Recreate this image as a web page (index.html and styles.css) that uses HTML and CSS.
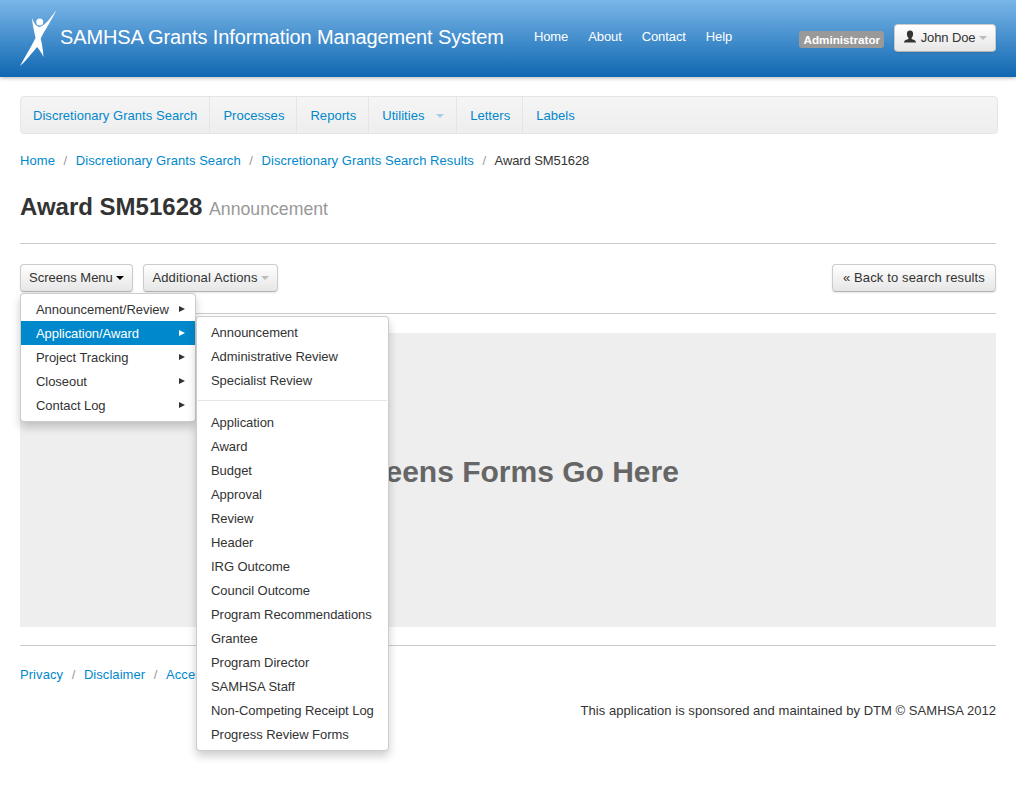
FILE: index.html
```html
<!DOCTYPE html>
<html lang="en">
  <head>
    <meta charset="UTF-8" />
    <title>Award SM51628</title>
    <link rel="stylesheet" href="styles.css">
  </head>
  <body>
    <header class="topbar">
      <svg class="logo" width="40" height="58" viewBox="0 0 40 58">
        <circle cx="19.7" cy="12" r="3.5" fill="#fff" />
        <path fill="#fff" d="M12 8 C14 13 16 16.5 19.5 17 C25 16 30 8 36.5 0 C32 9 27 17 23.5 23 C22 26 21 27 20.7 29 C22 33 23 40 23.5 47 C21 42 19 39 17 37 C12 43 5 52 0 56 C5 47 11 37 15.5 28 C15 24 12.5 16 12 8 Z" />
      </svg>
      <div class="brand">SAMHSA Grants Information Management System</div>
      <nav class="topnav">
        <a href="#">Home</a>
        <a href="#">About</a>
        <a href="#">Contact</a>
        <a href="#">Help</a>
      </nav>
      <div class="user">
        <span class="role">Administrator</span>
        <button class="btn userBtn">
          <svg width="14" height="14" viewBox="0 0 14 14"><path fill="#333" d="M7 0.5 C9.2 0.5 10.3 2.2 10.1 4.2 C10 6 9.2 7.2 8.6 7.8 L8.6 9 C10 9.6 13 10.2 13 12.5 L1 12.5 C1 10.2 4 9.6 5.4 9 L5.4 7.8 C4.8 7.2 4 6 3.9 4.2 C3.7 2.2 4.8 0.5 7 0.5 Z" /></svg>
          John Doe <span class="caret light"></span>
        </button>
      </div>
    </header>

    <main class="page">
      <nav class="subnav">
        <a href="#">Discretionary Grants Search</a>
        <a href="#">Processes</a>
        <a href="#">Reports</a>
        <a href="#">Utilities <span class="caret blue"></span></a>
        <a href="#">Letters</a>
        <a href="#">Labels</a>
      </nav>

      <ul class="crumbs">
        <li><a href="#">Home</a></li>
        <li><a href="#">Discretionary Grants Search</a></li>
        <li><a href="#">Discretionary Grants Search Results</a></li>
        <li class="current">Award SM51628</li>
      </ul>

      <h1>Award SM51628 <small>Announcement</small></h1>
      <hr class="headRule" />

      <div class="toolbar">
        <div class="menuWrap">
          <button class="btn">Screens Menu <span class="caret"></span></button>
          <ul class="menu mainMenu">
            <li><a href="#">Announcement/Review</a></li>
            <li class="active"><a href="#">Application/Award</a>
              <ul class="menu subMenu">
                <li><a href="#">Announcement</a></li>
                <li><a href="#">Administrative Review</a></li>
                <li><a href="#">Specialist Review</a></li>
                <li class="divider"></li>
                <li><a href="#">Application</a></li>
                <li><a href="#">Award</a></li>
                <li><a href="#">Budget</a></li>
                <li><a href="#">Approval</a></li>
                <li><a href="#">Review</a></li>
                <li><a href="#">Header</a></li>
                <li><a href="#">IRG Outcome</a></li>
                <li><a href="#">Council Outcome</a></li>
                <li><a href="#">Program Recommendations</a></li>
                <li><a href="#">Grantee</a></li>
                <li><a href="#">Program Director</a></li>
                <li><a href="#">SAMHSA Staff</a></li>
                <li><a href="#">Non-Competing Receipt Log</a></li>
                <li><a href="#">Progress Review Forms</a></li>
              </ul>
            </li>
            <li><a href="#">Project Tracking</a></li>
            <li><a href="#">Closeout</a></li>
            <li><a href="#">Contact Log</a></li>
          </ul>
        </div>
        <button class="btn wideBtn">Additional Actions <span class="caret light"></span></button>
        <button class="btn wideBtn backBtn">« Back to search results</button>
      </div>
      <hr class="toolRule" />

      <section class="panel">
        <h2>Screens Forms Go Here</h2>
      </section>
      <hr class="footRule" />

      <footer>
        <ul class="crumbs footLinks">
          <li><a href="#">Privacy</a></li>
          <li><a href="#">Disclaimer</a></li>
          <li><a href="#">Accessibility</a></li>
        </ul>
        <p class="sponsor">This application is sponsored and maintained by DTM © SAMHSA 2012</p>
      </footer>
    </main>
  </body>
</html>
```

FILE: styles.css
```css
* {
  box-sizing: border-box;
}
body {
  margin: 0;
  min-height: 803px;
  font-family: "Liberation Sans", Arial, sans-serif;
  font-size: 13px;
  line-height: 18px;
  color: #333;
  background: #fff;
}
a {
  color: #0088cc;
  text-decoration: none;
}
ul {
  list-style: none;
  margin: 0;
  padding: 0;
}
hr {
  border: 0;
  border-top: 1px solid #ccc;
  margin: 0;
}

/* top bar */
.topbar {
  display: flex;
  align-items: center;
  height: 77px;
  padding: 0 20px;
  background: linear-gradient(#7ab6e8, #0f67b1);
  box-shadow: 0 1px 4px rgba(0, 0, 0, 0.3);
}
.logo {
  flex: none;
}
.brand {
  margin: -3px 0 0;
  color: #fff;
  font-size: 20px;
  letter-spacing: -0.12px;
}
.topnav {
  display: flex;
  gap: 20px;
  margin: -3px 0 0 30px;
  letter-spacing: -0.1px;
}
.topnav a {
  color: #fff;
}
.user {
  display: flex;
  align-items: center;
  gap: 10px;
  margin: -1px 0 0 auto;
}
.role {
  margin-top: 2px;
  padding: 0 4px;
  height: 17px;
  line-height: 17px;
  border-radius: 3px;
  background: #999;
  color: #fff;
  font-size: 11.7px;
  font-weight: bold;
}

/* buttons */
.btn {
  display: inline-block;
  height: 28px;
  padding: 0 8px;
  border: 1px solid #ccc;
  border-bottom-color: #b3b3b3;
  border-radius: 4px;
  background: linear-gradient(#fff, #e6e6e6);
  box-shadow: 0 1px 2px rgba(0, 0, 0, 0.1);
  color: #333;
  font: inherit;
  white-space: nowrap;
}
.wideBtn {
  letter-spacing: 0.14px;
}
.userBtn {
  letter-spacing: -0.1px;
}
.userBtn svg {
  vertical-align: -2px;
}
.caret {
  display: inline-block;
  width: 0;
  height: 0;
  vertical-align: 2px;
  border: 4px solid transparent;
  border-top-color: #000;
  border-bottom: 0;
}
.caret.light {
  border-top-color: #bbb;
}
.caret.blue {
  margin-left: 8px;
  border-top-color: #a7cfe6;
}

/* page */
.page {
  padding: 19px 20px 0;
}
.subnav {
  display: flex;
  height: 38px;
  margin-right: -2px;
  border: 1px solid #e5e5e5;
  border-radius: 4px;
  background: linear-gradient(#f5f5f5, #eee);
  letter-spacing: 0.04px;
}
.subnav a {
  padding: 0 12px 0 13px;
  line-height: 37px;
  border-right: 1px solid #e5e5e5;
}
.subnav a:first-child {
  padding-left: 12px;
}
.subnav a:last-child {
  border-right: 0;
}
.crumbs {
  display: flex;
  margin-top: 18px;
  letter-spacing: 0.06px;
}
.crumbs li + li::before {
  content: "/";
  padding: 0 8.6px;
  color: #999;
}
.crumbs .current {
  letter-spacing: -0.1px;
}
h1 {
  margin: 22px 0 0;
  font-size: 24px;
  line-height: 30px;
}
h1 small {
  color: #999;
  font-size: 17.7px;
  font-weight: normal;
}
.headRule {
  margin-top: 19px;
}
.toolbar {
  display: flex;
  gap: 10px;
  margin-top: 20px;
}
.backBtn {
  margin-left: auto;
  padding: 0 10px;
}
.toolRule {
  margin-top: 21px;
}
.panel {
  height: 294px;
  margin-top: 19px;
  padding-top: 121px;
  background: #eee;
  text-align: center;
}
.panel h2 {
  margin: 0;
  color: #666;
  font-size: 30px;
  line-height: 36px;
}
.footRule {
  margin-top: 18px;
}
.crumbs.footLinks {
  margin-top: 20px;
}
.sponsor {
  margin: 18px 0 0;
  text-align: right;
  letter-spacing: 0.04px;
}

/* dropdowns, these sit over the page */
.menuWrap {
  position: relative;
}
.menu {
  position: absolute;
  z-index: 10;
  padding: 3px 0 4px;
  background: #fff;
  border: 1px solid rgba(0, 0, 0, 0.2);
  border-radius: 4px;
  box-shadow: 0 5px 10px rgba(0, 0, 0, 0.2);
  letter-spacing: -0.05px;
  white-space: nowrap;
}
.menu li {
  height: 24px;
}
.menu a {
  display: block;
  height: 24px;
  padding: 0 15px;
  color: #333;
  line-height: 26px;
}
.mainMenu {
  top: 29px;
  left: 0;
  width: 176px;
}
.mainMenu > li {
  position: relative;
}
.mainMenu > li > a::after {
  content: "";
  position: absolute;
  right: 10px;
  top: 9px;
  border: 3.5px solid transparent;
  border-left: 6px solid #333;
  border-right: 0;
}
.mainMenu > li.active > a {
  background: #0088cc;
  color: #fff;
}
.mainMenu > li.active > a::after {
  border-left-color: #fff;
}
.subMenu {
  top: -5px;
  left: 175px;
  width: 193px;
}
.subMenu a {
  padding: 0 14px;
}
.subMenu li.divider {
  height: 1px;
  margin: 8px 1px 9px;
  background: #e5e5e5;
}
```
